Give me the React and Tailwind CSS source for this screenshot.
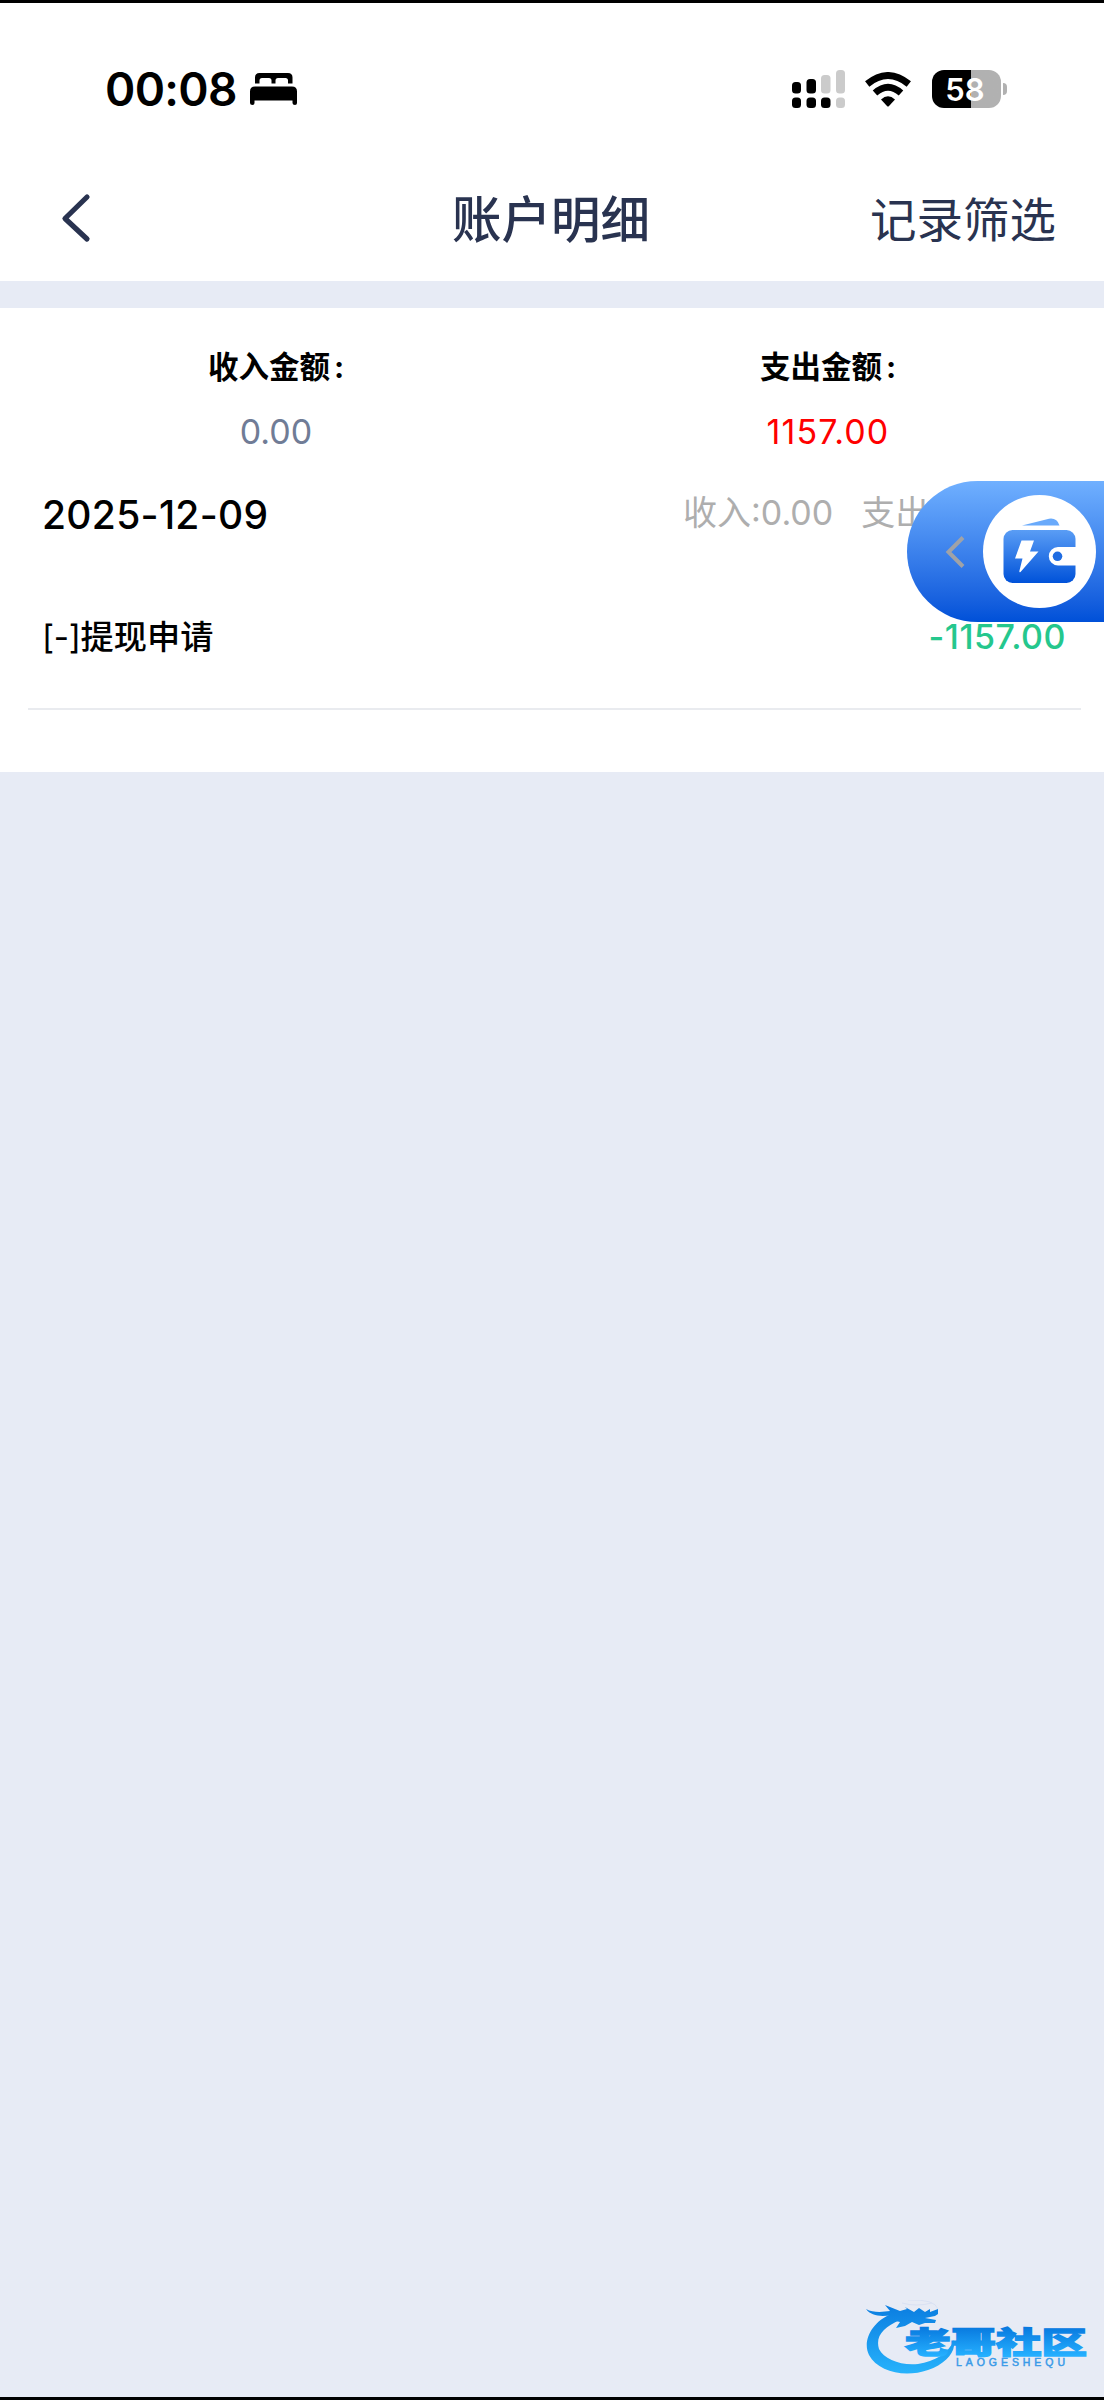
import React from 'react';

const summary = [
  { label: '收入金额', value: '0.00', color: 'text-[#707c96]' },
  { label: '支出金额', value: '1157.00', color: 'text-[#ff0000] tracking-[1.1px]' },
];

const BedIcon = () => (
  <svg width="48" height="34" viewBox="0 0 48 34" fill="#000">
    <path d="M5 11.500V5.500Q5 1 9.500 1H38Q42.500 1 42.500 5.500V11.500H38V8.500Q38 6 35.500 6H28Q25.500 6 25.500 8.500V11.500H21.500V8.500Q21.500 6 19 6H12Q9.500 6 9.500 8.500V11.500Z" />
    <path d="M0 19.500Q0 14.500 5 14.500H42Q47 14.500 47 19.500V31Q47 33 45 33Q42.500 33 42.500 31V28.500H4.500V31Q4.500 33 2.500 33Q0 33 0 31Z" />
  </svg>
);

const SignalIcon = () => (
  <svg width="54" height="38" viewBox="0 0 54 38">
    <g fill="#000">
      <rect x="0" y="12" width="9" height="11.500" rx="3.500" />
      <rect x="14.500" y="9" width="9.500" height="14.500" rx="3.500" />
      <rect x="0" y="27.500" width="9" height="10.500" rx="3.500" />
      <rect x="14.500" y="27.500" width="9.500" height="10.500" rx="3.500" />
      <rect x="29" y="27.500" width="9.500" height="10.500" rx="3.500" />
    </g>
    <g fill="#cbcbcb">
      <rect x="29" y="5" width="9.500" height="18.500" rx="3.500" />
      <rect x="44" y="0" width="9" height="23.500" rx="3.500" />
      <rect x="44" y="27.500" width="9" height="10.500" rx="3.500" />
    </g>
  </svg>
);

const WifiIcon = () => (
  <svg width="46" height="35" viewBox="0 0 46 35">
    <path d="M2.200 12Q23 -5 43.800 12" fill="none" stroke="#000" strokeWidth="6.800" />
    <path d="M10 21Q23 9.500 36 21" fill="none" stroke="#000" strokeWidth="6.800" />
    <path d="M16 27.500Q23 21 30 27.500L24 34Q23 35 22 34Z" fill="#000" />
  </svg>
);

const WalletIcon = () => (
  <svg width="73" height="66" viewBox="0 0 73 66">
    <defs>
      <linearGradient id="wallet" x1="0" y1="0" x2="0" y2="1">
        <stop offset="0" stopColor="#5a9df5" />
        <stop offset="1" stopColor="#0052d9" />
      </linearGradient>
    </defs>
    <path d="M19 7.500L46 0.700Q54 -0.500 56.500 7.500Z" fill="#69aafb" />
    <rect x="0.500" y="12" width="72" height="53" rx="9" fill="url(#wallet)" />
    <path d="M18.500 22.500H31L27 33.500H35.500L17.500 54Q16 55 16.500 52.500L19.500 40.500H12Z" fill="#fff" />
    <path d="M73 29H55A9.200 9.200 0 0 0 55 47.400H73Z" fill="#fff" />
    <circle cx="54.500" cy="38.300" r="4.800" fill="#1f6ce2" />
  </svg>
);

const SiteLogo = () => (
  <svg width="224" height="76" viewBox="0 0 224 76">
    <defs>
      <linearGradient id="logo" gradientUnits="userSpaceOnUse" x1="0" y1="5" x2="0" y2="74">
        <stop offset="0" stopColor="#0b7de0" />
        <stop offset="1" stopColor="#27b3fc" />
      </linearGradient>
      <linearGradient id="logoText" gradientUnits="userSpaceOnUse" x1="0" y1="27" x2="0" y2="56">
        <stop offset="0" stopColor="#0879df" />
        <stop offset="1" stopColor="#25b0ff" />
      </linearGradient>
    </defs>
    {/* dragon */}
    <path
      d="M26 14C7 22 -3 41 4 55C13 72 40 78 63 70C78 65 88 55 89 46V40C83 54 70 61 53 64C36 66 19 59 14 49C10 36 19 27 35 20Z"
      fill="url(#logo)"
    />
    <path
      d="M1 9C8 13 18 12 25 11L20 5L35 11L42 9L40 7L49 12L54 8L60 12L65 9L65 12L73 9L73 14L70 16L60 18L71 20L70 23L60 23L54 25L47 22L40 26L31 28L35 22L22 19L27 15C16 17 6 16 1 9Z"
      fill="url(#logo)"
    />
    <path d="M37 3Q51 7 67 3M43 0Q70 -1 73 9" fill="none" stroke="#d9e1f3" strokeWidth="1" />
    <text
      x="40"
      y="52.500"
      textLength="182"
      lengthAdjust="spacingAndGlyphs"
      fontSize="30"
      fontWeight="900"
      fill="url(#logoText)"
      stroke="url(#logoText)"
      strokeWidth="1.400"
    >
      老哥社区
    </text>
    <text x="91" y="66" textLength="109" fontFamily="Liberation Sans" fontSize="10.500" fill="#3b9be8" stroke="#3b9be8" strokeWidth="0.500">
      LAOGESHEQU
    </text>
  </svg>
);

const StatusBar = () => (
  <div className="flex h-[135px] items-start justify-between pl-[105px] pr-[97px] pt-[64px]">
    <div className="flex items-center gap-[13px]">
      <span className="text-[46px] leading-[44px] font-semibold tracking-[-0.7px]">00:08</span>
      <BedIcon />
    </div>
    <div className="flex items-center pt-[3px]">
      <SignalIcon />
      <div className="ml-[19px]">
        <WifiIcon />
      </div>
      <div className="ml-[21px] flex h-[38px] w-[69px] items-center justify-center rounded-[12px] bg-linear-to-r from-black from-57% to-[#b1b1b1] to-57% pr-[3px]">
        <span className="text-[31px] leading-none font-semibold text-white">58</span>
      </div>
      <div className="ml-0.5 h-3 w-1 rounded-r-full bg-[#b1b1b1]" />
    </div>
  </div>
);

const NavBar = () => (
  <div className="grid h-[143px] grid-cols-3 items-start pl-[60px] pr-[48px] text-[#293350]">
    <svg className="mt-[55px]" width="32" height="50" viewBox="0 0 32 50" fill="none" stroke="#293350" strokeWidth="5.200" strokeLinecap="round" strokeLinejoin="round">
      <path d="M27 4L5 25.500L27 46" />
    </svg>
    <h1 className="mt-[47px] -ml-[14px] text-center text-[49.500px] leading-[70px] font-medium">账户明细</h1>
    <button className="mt-[47px] text-right text-[46.500px] leading-[70px]">记录筛选</button>
  </div>
);

const WalletTab = () => (
  <div className="absolute top-[478px] right-0 flex h-[141px] w-[197px] items-center rounded-l-full bg-linear-to-b from-[#70b0ff] to-[#0050d8] pl-[38px]">
    <svg width="20" height="34" viewBox="0 0 20 34" fill="none" stroke="#a0a2a7" strokeWidth="4">
      <path d="M18 2.500L3.500 17L18 31.500" />
    </svg>
    <div className="ml-[18px] flex size-[113px] items-center justify-center rounded-full bg-white pb-[1px]">
      <WalletIcon />
    </div>
  </div>
);

export default function App() {
  return (
    <div className="relative flex h-[2400px] w-[1104px] flex-col overflow-hidden border-y-[3px] border-black bg-[#e7ebf5] font-[Inter,'Noto_Sans_CJK_SC',sans-serif] text-black">
      <div className="bg-white">
        <StatusBar />
        <NavBar />
      </div>

      <div className="mt-[27px] h-[464px] bg-white">
        <div className="grid grid-cols-2 pt-[36px]">
          {summary.map((item) => (
            <div key={item.label} className="flex flex-col items-center">
              <div className="text-[30.500px] leading-[46px] font-bold">
                {item.label}
                <span className="ml-[4px]">:</span>
              </div>
              <div className={`mt-[19px] text-[34px] leading-[46px] ${item.color}`}>{item.value}</div>
            </div>
          ))}
        </div>

        <div className="flex items-start justify-between pl-[42px] pr-[39px] pt-[32px]">
          <div className="mt-[5px] text-[39px] leading-[46px] font-medium tracking-[0.3px]">2025-12-09</div>
          <div className="mt-[3px] flex w-[382px] gap-[28px] text-[34px] leading-[46px] whitespace-nowrap text-[#aeaeae]">
            <span>收入:0.00</span>
            <span>支出:1157.00</span>
          </div>
        </div>

        <div className="mt-[76px] flex items-center justify-between pl-[42px] pr-[38px] leading-[46px] font-medium">
          <div className="text-[33.200px]">
            <span className="font-normal tracking-[-0.3px]">[-]</span>
            提现申请
          </div>
          <div className="text-[34px] tracking-[0.5px] text-[#25c78d]">-1157.00</div>
        </div>
        <div className="mt-[48px] ml-7 h-[2px] w-[1053px] bg-[#e9ebef]" />
      </div>

      <WalletTab />

      <div className="mt-auto mb-[21px] flex justify-end pr-[15px]">
        <SiteLogo />
      </div>
    </div>
  );
}
